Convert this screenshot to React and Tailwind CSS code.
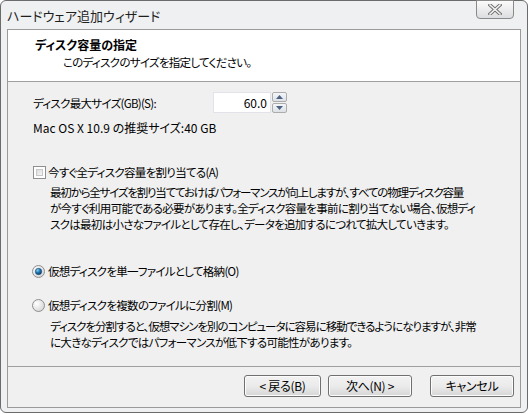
import React from 'react';

const font = "font-['Noto_Sans_CJK_JP',sans-serif] [font-feature-settings:'palt']";
const ja = 'text-[11.5px] tracking-[-0.7px] whitespace-nowrap';

function CheckBox() {
  return (
    <span className="w-[13px] h-[13px] border border-[#8f8f8f] bg-white p-[2px] flex">
      <span className="flex-1 bg-gradient-to-br from-[#dcdcdc] to-[#f6f6f6] border border-[#c8c8c8]" />
    </span>
  );
}

function Radio({ checked }) {
  return (
    <svg width="13" height="13" viewBox="0 0 13 13">
      <defs>
        <radialGradient id="rg-bg" cx="0.35" cy="0.35" r="0.7">
          <stop offset="0" stopColor="#ffffff" />
          <stop offset="1" stopColor="#d6d6d6" />
        </radialGradient>
        <radialGradient id="rg-dot" cx="0.35" cy="0.3" r="0.7">
          <stop offset="0" stopColor="#8fd3f2" />
          <stop offset="0.5" stopColor="#1f7db8" />
          <stop offset="1" stopColor="#0d3f70" />
        </radialGradient>
      </defs>
      <circle cx="6.5" cy="6.5" r="6" fill="url(#rg-bg)" stroke="#8e8f8f" strokeWidth="1" />
      {checked && <circle cx="6.5" cy="6.5" r="3.2" fill="url(#rg-dot)" stroke="#1c4a78" strokeWidth="0.6" />}
    </svg>
  );
}

function SpinBox() {
  return (
    <div className="flex h-[21px]">
      <div className="w-[58px] h-full bg-white border border-[#e2e3ea] flex items-center justify-end pr-[3px] text-[12px]">
        60.0
      </div>
      <div className="w-[16px] h-full flex flex-col gap-px pl-px">
        <div className="flex-1 border border-[#acacac] rounded-[2px] bg-gradient-to-b from-[#f4f6f8] to-[#dde1e6] flex items-center justify-center">
          <svg width="7" height="4" viewBox="0 0 7 4"><path d="M0 4 L3.5 0 L7 4 Z" fill="#4d6185" /></svg>
        </div>
        <div className="flex-1 border border-[#acacac] rounded-[2px] bg-gradient-to-b from-[#f4f6f8] to-[#dde1e6] flex items-center justify-center">
          <svg width="7" height="4" viewBox="0 0 7 4"><path d="M0 0 L7 0 L3.5 4 Z" fill="#4d6185" /></svg>
        </div>
      </div>
    </div>
  );
}

function Button({ children, w }) {
  return (
    <button className={`${w} h-[22px] border border-[#707070] rounded-[3px] bg-gradient-to-b from-[#f2f2f2] via-[#ebebeb] to-[#d6d6d6] text-[12px] leading-none text-black flex items-center justify-center shadow-[inset_0_0_0_1px_#fcfcfc] whitespace-pre tracking-[-0.3px]`}>
      {children}
    </button>
  );
}

export default function App() {
  return (
    <div className={`w-[529px] h-[414px] bg-white ${font} text-black`}>
      <div className="w-[528px] h-[413px] border border-[#6b6b6b] rounded-[6px] bg-[#eef0f2] flex flex-col px-[6px] pb-[4px]">
        {/* title bar */}
        <div className="h-[28px] flex items-start relative">
          <span className="mt-[6px] text-[13px] leading-[18px] text-[#1e1e1e]">ハードウェア追加ウィザード</span>
          <div className="ml-auto mr-[7px] -mt-px w-[38px] h-[19px] border border-[#8a8a8a] rounded-b-[4px] bg-gradient-to-b from-[#fbfbfb] to-[#dcdde0] flex items-center justify-center">
            <svg width="14" height="11" viewBox="0 0 14 11">
              <path d="M2 1 L12 10 M12 1 L2 10" stroke="#6c6c6c" strokeWidth="3.4" strokeLinecap="square" />
              <path d="M2 1 L12 10 M12 1 L2 10" stroke="#f4f4f4" strokeWidth="1.6" strokeLinecap="square" />
            </svg>
          </div>
        </div>

        {/* content */}
        <div className="flex-1 border border-[#9a9a9a] bg-[#f0f0f0] flex flex-col">
          <div className="h-[52px] bg-white border-b border-[#a0a0a0] pl-[27px] pt-[7px]">
            <div className="text-[12px] leading-[16px] font-bold">ディスク容量の指定</div>
            <div className={`pl-[28px] mt-px leading-[16px] ${ja}`}>このディスクのサイズを指定してください。</div>
          </div>

          <div className="flex-1 pl-[25px] pr-[20px] text-[12px] leading-[16px]">
            <div className="mt-[10px] flex items-center">
              <span className={`w-[180px] ${ja} tracking-[-0.3px]`}>ディスク最大サイズ(GB)(S):</span>
              <SpinBox />
            </div>
            <div className="mt-[7px]">Mac OS X 10.9 の推奨サイズ:40 GB</div>

            <div className="mt-[28px] flex items-center gap-[2px]">
              <CheckBox />
              <span className={ja}>今すぐ全ディスク容量を割り当てる(A)</span>
            </div>
            <div className={`mt-[4px] pl-[17px] ${ja}`}>
              <div className="tracking-[-1.2px]">最初から全サイズを割り当てておけばパフォーマンスが向上しますが、すべての物理ディスク容量</div>
              <div>が今すぐ利用可能である必要があります。全ディスク容量を事前に割り当てない場合、仮想ディ</div>
              <div>スクは最初は小さなファイルとして存在し、データを追加するにつれて拡大していきます。</div>
            </div>

            <div className="mt-[31px] flex items-center gap-[3px] -ml-px">
              <Radio checked />
              <span className={ja}>仮想ディスクを単一ファイルとして格納(O)</span>
            </div>
            <div className="mt-[18px] flex items-center gap-[3px] -ml-px">
              <Radio />
              <span className={ja}>仮想ディスクを複数のファイルに分割(M)</span>
            </div>
            <div className={`mt-[5px] pl-[17px] ${ja}`}>
              <div className="tracking-[-1px]">ディスクを分割すると、仮想マシンを別のコンピュータに容易に移動できるようになりますが、非常</div>
              <div>に大きなディスクではパフォーマンスが低下する可能性があります。</div>
            </div>
          </div>

          <div className="h-[41px] border-t border-[#a0a0a0] flex items-start justify-end pt-[8px] pr-[6px] gap-[7px]">
            <Button w="w-[77px]">{'< 戻る(B)'}</Button>
            <Button w="w-[84px]">{'次へ(N) >'}</Button>
            <div className="w-[4px]" />
            <Button w="w-[84px]">キャンセル</Button>
          </div>
        </div>
      </div>
    </div>
  );
}
